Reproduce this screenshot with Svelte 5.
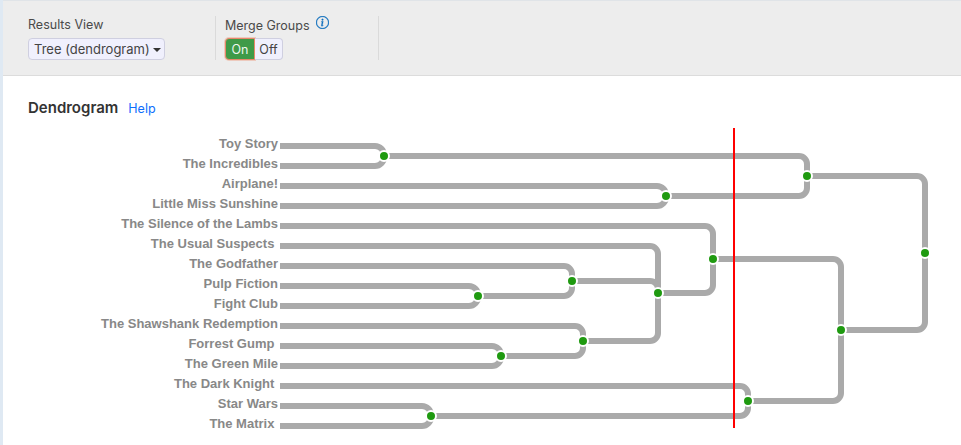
<script lang="ts">
  const movies = [
    "Toy Story", "The Incredibles", "Airplane!", "Little Miss Sunshine",
    "The Silence of the Lambs", "The Usual Suspects ", "The Godfather", "Pulp Fiction",
    "Fight Club", "The Shawshank Redemption", "Forrest Gump ", "The Green Mile",
    "The Dark Knight ", "Star Wars", "The Matrix "
  ];
  const rowY = (i: number) => 146 + i * 20;

  // branch: from (x0,y0) across to the node's x, then round the corner into (x,y)
  function branch(x0: number, y0: number, x: number, y: number) {
    const r = Math.abs(y - y0) <= 10 ? 9 : 8;
    const dir = y0 < y ? 1 : -1;
    return `M${x0} ${y0}H${x - r}A${r} ${r} 0 0 ${dir > 0 ? 1 : 0} ${x} ${y0 + dir * r}V${y}`;
  }

  const nodes = [
    { x: 384, y: 156, from: [[280, 146], [280, 166]] },
    { x: 666, y: 196, from: [[280, 186], [280, 206]] },
    { x: 807, y: 176, from: [[384, 156], [666, 196]] },
    { x: 478, y: 296, from: [[280, 286], [280, 306]] },
    { x: 572, y: 281, from: [[280, 266], [478, 296]] },
    { x: 501, y: 356, from: [[280, 346], [280, 366]] },
    { x: 583, y: 341, from: [[280, 326], [501, 356]] },
    { x: 658, y: 293, from: [[280, 246], [572, 281], [583, 341]] },
    { x: 713, y: 259, from: [[280, 226], [658, 293]] },
    { x: 431, y: 416, from: [[280, 406], [280, 426]] },
    { x: 748, y: 401, from: [[280, 386], [431, 416]] },
    { x: 841, y: 330, from: [[713, 259], [748, 401]] },
    { x: 925, y: 253, from: [[807, 176], [841, 330]] }
  ];
</script>

<div class="page">
  <div class="toolbar">
    <div class="group first">
      <div class="label">Results View</div>
      <button class="select">Tree (dendrogram)<span class="caret"></span></button>
    </div>
    <div class="group second">
      <div class="label">
        Merge Groups
        <svg class="info" width="13" height="13" viewBox="0 0 16 16" fill="#0d6ebd" stroke="#0d6ebd" stroke-width="0.4">
          <path d="M8 15A7 7 0 1 1 8 1a7 7 0 0 1 0 14zm0 1A8 8 0 1 0 8 0a8 8 0 0 0 0 16z" />
          <path d="M8.93 6.59l-2.29.28-.08.38.45.08c.29.07.35.18.29.47l-.74 3.47c-.19.9.11 1.32.81 1.32.55 0 1.18-.25 1.47-.6l.09-.42c-.2.18-.5.25-.69.25-.27 0-.37-.19-.3-.53l1-4.7zM9 4.5a1 1 0 1 1-2 0 1 1 0 0 1 2 0z" />
        </svg>
      </div>
      <div class="toggle">
        <button class="on">On</button>
        <button class="off">Off</button>
      </div>
    </div>
  </div>

  <div class="content">
    <div class="heading">
      <h2>Dendrogram</h2>
      <a href="#help">Help</a>
    </div>
  </div>

  <svg class="tree" width="961" height="445" viewBox="0 0 961 445">
    {#each movies as m, i}
      <text x="278" y={rowY(i) + 2} xml:space="preserve">{m}</text>
    {/each}
    {#each nodes as n}
      {#each n.from as f}
        <path class="edge" d={branch(f[0], f[1], n.x, n.y)} />
      {/each}
    {/each}
    {#each nodes as n}
      <circle class="node" cx={n.x} cy={n.y} r="5" />
    {/each}
    <line class="cut" x1="734" y1="128" x2="734" y2="428" />
  </svg>
</div>

<style>
  :global(body) {
    margin: 0;
    background: #fff;
  }
  .page {
    position: relative;
    width: 961px;
    height: 445px;
    overflow: hidden;
    box-sizing: border-box;
    border-left: 3px solid #dfe9f3;
    font-family: Inter, "Noto Sans", sans-serif;
    color: #444;
  }
  .toolbar {
    display: flex;
    height: 76px;
    box-sizing: border-box;
    padding-top: 15px;
    background: #ededed;
    border-top: 1px solid #e0e4e8;
    border-bottom: 1px solid #dcdcdc;
  }
  .group {
    height: 44px;
    box-sizing: border-box;
    border-right: 1px solid #dadada;
    font-size: 12.5px;
  }
  .first {
    width: 213px;
    padding-left: 25px;
  }
  .second {
    width: 163px;
    padding-left: 9px;
  }
  .label {
    height: 22px;
    line-height: 17px;
    color: #4a4a4a;
    white-space: nowrap;
  }
  .info {
    margin-left: 3px;
    vertical-align: 1px;
  }
  button {
    font: inherit;
    color: #444;
    height: 22px;
    padding: 0;
    box-sizing: border-box;
    background: #f0f0fd;
    border: 1px solid #cfcfe0;
  }
  .select {
    width: 137px;
    padding-left: 5px;
    border-radius: 4px;
    font-size: 13px;
    text-align: left;
    white-space: nowrap;
  }
  .caret {
    display: inline-block;
    margin-left: 3px;
    vertical-align: 2px;
    border-top: 4px solid #333;
    border-left: 4px solid transparent;
    border-right: 4px solid transparent;
  }
  .toggle {
    display: flex;
  }
  .on {
    width: 30px;
    color: #eef6ee;
    background: #3f9a48;
    border: 1px solid #e8876a;
    border-radius: 4px 0 0 4px;
    box-shadow: 0 0 0 1px rgba(238, 159, 134, 0.45);
  }
  .off {
    width: 28px;
    border-left: 0;
    border-radius: 0 4px 4px 0;
  }
  .content {
    padding: 22px 0 0 25px;
  }
  .heading {
    display: flex;
    align-items: baseline;
    gap: 10px;
  }
  h2 {
    margin: 0;
    font-size: 15px;
    font-weight: 600;
    color: #333;
  }
  a {
    font-size: 12.5px;
    color: #0d6efd;
    text-decoration: none;
  }
  .tree {
    position: absolute;
    left: -3px;
    top: 0;
    pointer-events: none;
  }
  text {
    font-family: "Liberation Sans", Arial, sans-serif;
    font-size: 13px;
    font-weight: 700;
    fill: #888;
    text-anchor: end;
    white-space: pre;
  }
  .edge {
    fill: none;
    stroke: #aaa;
    stroke-width: 6;
  }
  .node {
    fill: #1f9a10;
    stroke: #fff;
    stroke-width: 2;
  }
  .cut {
    stroke: #f00;
    stroke-width: 2;
  }
</style>
